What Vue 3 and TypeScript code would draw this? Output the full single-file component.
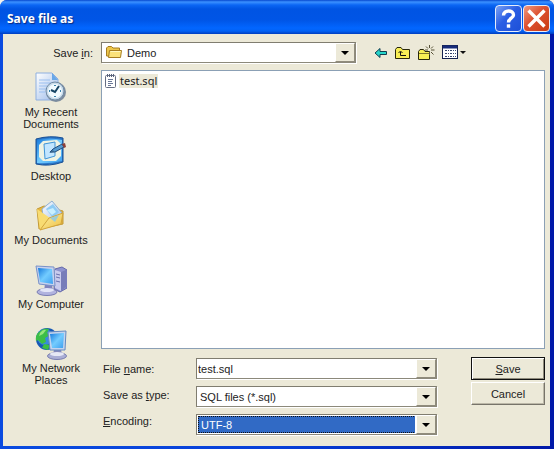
<script setup lang="ts">
import { ref } from 'vue'

interface Place {
  id: string
  label: string
}

const places: Place[] = [
  { id: 'recent', label: 'My Recent Documents' },
  { id: 'desktop', label: 'Desktop' },
  { id: 'documents', label: 'My Documents' },
  { id: 'computer', label: 'My Computer' },
  { id: 'network', label: 'My Network Places' },
]

const files = ref<string[]>(['test.sql'])
const folder = ref('Demo')
const fileName = ref('test.sql')
const fileType = ref('SQL files (*.sql)')
const encoding = ref('UTF-8')
</script>

<template>
  <main class="window">
    <header class="titlebar">
      <h1>Save file as</h1>
      <button type="button" class="caption help" aria-label="Help">
        <svg viewBox="0 0 21 21" width="21" height="21" fill="none" stroke="#fff" stroke-width="3.400">
          <path d="M5.500 7.500C5.500 1.500 15.500 1.500 15.500 7C15.500 10.500 10.500 10 10.500 14.500" />
          <path d="M8.800 18H12.200" />
        </svg>
      </button>
      <button type="button" class="caption close" aria-label="Close">
        <svg viewBox="0 0 21 21" width="21" height="21" fill="none" stroke="#fff" stroke-width="3.400">
          <path d="M2.500 2.500L18.500 18.500M18.500 2.500L2.500 18.500" />
        </svg>
      </button>
    </header>

    <form class="body" @submit.prevent>
      <div class="lookin">
        <label for="folder">Save <u>i</u>n:</label>
        <div class="combo folder">
          <svg class="folder-icon" viewBox="0 0 16 16" width="16" height="16">
            <path d="M.5 12V4L2 2.500H5.500L7 4H13.500V13Z" fill="#edc64a" stroke="#a67d20" />
            <path d="M2.500 13.500L3.500 6.500H15.500L14.500 13.500Z" fill="#fbe27a" stroke="#a67d20" />
            <path d="M4.500 7.500H14.500" stroke="#fff8c0" />
          </svg>
          <select id="folder" v-model="folder"><option>Demo</option></select>
          <span class="arrow" aria-hidden="true"><i></i></span>
        </div>
        <div class="tools">
          <button type="button" aria-label="Back">
            <svg viewBox="0 0 14 12" width="14" height="12">
              <path d="M1 6L6 1.500V4.500H12.500V7.500H6V10.500Z" fill="#25d5ca" stroke="#123d50" />
            </svg>
          </button>
          <button type="button" aria-label="Up one level">
            <svg viewBox="0 0 16 14" width="16" height="14">
              <path d="M.5 12.500V3.500L2 1.500H6L7.500 3.500H14.500V12.500Z" fill="#f8ee55" stroke="#29270c" />
              <path d="M5.500 9.500V6M5.500 9.500H11M3.500 7L5.500 5L7.500 7" fill="none" stroke="#111" />
            </svg>
          </button>
          <button type="button" aria-label="Create new folder">
            <svg viewBox="0 0 17 16" width="17" height="16">
              <path d="M.5 14.500V6.500L2 4.500H5.500L7 6.500H11.500V14.500Z" fill="#f8ee55" stroke="#29270c" />
              <path d="M1 8.500H11" stroke="#81772a" />
              <path d="M11.500 0V3M11.500 7V10M7 5H10M13 5H16.500M8 1.500L10 3.500M15 1.500L13 3.500M13 7L15.500 9.500" stroke="#555036" />
            </svg>
          </button>
          <button type="button" aria-label="View menu">
            <svg viewBox="0 0 25 15" width="25" height="15">
              <rect x=".5" y=".5" width="15" height="13" fill="#fff" stroke="#17234f" />
              <path d="M1 2H15" stroke="#182c7a" stroke-width="3" />
              <path d="M3 5.500H14M3 8.500H14M3 11.500H14" stroke="#36456d" stroke-dasharray="2 1 1 1" />
              <path d="M18 6H24L21 9Z" fill="#111" />
            </svg>
          </button>
        </div>
      </div>

      <nav class="places" aria-label="Places">
        <button v-for="place in places" :key="place.id" type="button" class="place">
          <svg viewBox="0 0 32 32" width="32" height="32" aria-hidden="true">
            <defs>
              <linearGradient :id="place.id + '-screen'" x1="0" y1="0" x2="1" y2="1">
                <stop offset="0" stop-color="#1779dc" />
                <stop offset=".5" stop-color="#73ccff" />
                <stop offset="1" stop-color="#3f9fee" />
              </linearGradient>
              <linearGradient :id="place.id + '-pale'" x1="0" y1="0" x2="1" y2="1">
                <stop offset="0" stop-color="#fff" />
                <stop offset="1" stop-color="#9ab9e9" />
              </linearGradient>
              <linearGradient :id="place.id + '-gold'" x1="0" y1="0" x2="1" y2="1">
                <stop offset="0" stop-color="#fff6ae" />
                <stop offset="1" stop-color="#edbd3e" />
              </linearGradient>
            </defs>
            <g v-if="place.id === 'recent'">
              <path d="M1 1H17L23 7V28H1Z" :fill="`url(#${place.id}-pale)`" stroke="#8eafe0" />
              <path d="M17 1V8H23Z" fill="#68a7e7" />
              <path d="M4 8H15M4 11H17M4 14H12M4 17H11M4 20H10" stroke="#9abff0" />
              <circle cx="21" cy="20" r="10" fill="#7d8c9e" />
              <circle cx="20" cy="19" r="9" fill="#c8dae9" stroke="#718ba5" />
              <circle cx="20" cy="19" r="7" fill="#f1faff" />
              <path d="M20 13V14M20 24V25M14 19H15M25 19H26" stroke="#3983ad" stroke-width="2" />
              <path d="M24 14L20 20L16 18" fill="none" stroke="#174565" stroke-width="2" />
            </g>
            <g v-else-if="place.id === 'desktop'">
              <path d="M1 3Q15-1 28 2L28 26Q14 31 1 28Z" fill="#2a76c8" stroke="#174e93" />
              <path d="M2 4Q15 1 27 4V25Q14 28 2 27Z" :fill="`url(#${place.id}-screen)`" />
              <path d="M8 5L22 4L26 8V20L21 25H8L4 21V9Z" fill="#eef3e4" />
              <path d="M9 8L20 6V20L10 23Z" fill="#c2e6ff" stroke="#4095d7" />
              <path d="M15 16L18 13L27 8L29 11L20 16Z" fill="#559bd2" stroke="#224d7d" />
              <path d="M27 8L30 7L31 11L29 12Z" fill="#8e4038" />
              <path d="M14 17L18 14L19 16Z" fill="#35658f" />
            </g>
            <g v-else-if="place.id === 'documents'">
              <path d="M4 29L2 9L9 6L28 11L28 24Z" fill="#e7b840" stroke="#c39a37" />
              <path d="M7 9L17 1L27 13L21 25L9 22Z" :fill="`url(#${place.id}-pale)`" stroke="#8eafd2" />
              <path d="M11 9L18 4L24 12L18 18Z" fill="#8ecbf4" />
              <path d="M12 10L18 8L21 12L17 15Z" fill="#c8efff" />
              <path d="M2 9L15 18L5 30Z" fill="#f8dc72" />
              <path d="M5 30L14 18L28 13L26 24Z" :fill="`url(#${place.id}-gold)`" stroke="#d2a53b" />
              <path d="M15 18L20 22L24 15Z" fill="#8ac8e9" opacity=".8" />
            </g>
            <g v-else-if="place.id === 'computer'">
              <path d="M20 5L27 3L32 6V24L25 28L19 25Z" fill="#8e93cf" stroke="#6569aa" />
              <path d="M20 6L26 8V27L20 24Z" fill="#c8cbed" />
              <path d="M26 8L31 6V23L26 27Z" fill="#777db9" />
              <path d="M21 10L25 11M21 13L25 14M21 17L25 18" stroke="#6970ae" />
              <ellipse cx="12" cy="28" rx="10" ry="3.500" fill="#b1b3df" stroke="#797cb2" />
              <path d="M10 20L17 21L18 27H9Z" fill="#8184be" />
              <ellipse cx="12" cy="26" rx="7" ry="2" fill="#e3e5f7" />
              <path d="M1 2L19 3L20 22L4 20Z" fill="#c8d2ee" stroke="#7891c8" />
              <path d="M3 4L17 5L18 20L5 18Z" :fill="`url(#${place.id}-screen)`" />
            </g>
            <g v-else>
              <circle cx="12" cy="11" r="11" fill="#1759b5" />
              <circle cx="10" cy="9" r="8" fill="#378ae0" />
              <path d="M4 4Q9-1 14 1L12 5L15 7L10 10L11 14L7 16L3 12L1 13Q0 7 4 4ZM9 16L15 17L13 22L7 20Z" fill="#3cbe47" />
              <path d="M5 5Q8 1 11 2L8 6L4 8Z" fill="#98e67d" />
              <ellipse cx="22" cy="28" rx="9.500" ry="3.500" fill="#aaaed5" stroke="#777caf" />
              <path d="M19 21H26L27 27H18Z" fill="#8589bb" />
              <ellipse cx="22" cy="26" rx="7" ry="2" fill="#e6e8f5" />
              <path d="M13 4L31 3L30 22L15 22Z" fill="#c4d4ee" stroke="#6489c0" />
              <path d="M15 6L29 5L28 20L17 20Z" :fill="`url(#${place.id}-screen)`" />
            </g>
          </svg>
          <span>{{ place.label }}</span>
        </button>
      </nav>

      <ul class="files">
        <li v-for="file in files" :key="file">
          <svg viewBox="0 0 13 16" width="13" height="16" aria-hidden="true">
            <rect x="1.500" y="2.500" width="10" height="12" rx="1" fill="#fff" stroke="#666e83" />
            <path d="M3.500 1V4M5.500 1V4M7.500 1V4M9.500 1V4" stroke="#59637c" />
            <path d="M4 6.500H9M4 8.500H8M4 10.500H9M4 12.500H7" stroke="#697797" />
          </svg>
          <span>{{ file }}</span>
        </li>
      </ul>

      <section class="details">
        <div class="labels">
          <label for="file-name">File <u>n</u>ame:</label>
          <label for="file-type">Save as <u>t</u>ype:</label>
          <label for="encoding"><u>E</u>ncoding:</label>
        </div>
        <div class="fields">
          <div class="combo">
            <input id="file-name" v-model="fileName" type="text" />
            <button type="button" class="arrow" aria-label="Recent file names"><i></i></button>
          </div>
          <div class="combo">
            <select id="file-type" v-model="fileType"><option>SQL files (*.sql)</option></select>
            <span class="arrow" aria-hidden="true"><i></i></span>
          </div>
          <div class="combo selected">
            <select id="encoding" v-model="encoding"><option>UTF-8</option></select>
            <span class="arrow" aria-hidden="true"><i></i></span>
          </div>
        </div>
        <div class="actions">
          <button type="submit" class="push default"><u>S</u>ave</button>
          <button type="button" class="push">Cancel</button>
        </div>
      </section>
    </form>
  </main>
</template>

<style>
body {
  margin: 0;
  background: #f4f3ee;
}
</style>

<style scoped>
* {
  box-sizing: border-box;
}
.window {
  min-height: 100vh;
  display: flex;
  flex-direction: column;
  padding: 0 4px 3px 3px;
  background: linear-gradient(90deg, #0a4be0, #0840d8 50%, #0018a8);
  border-radius: 7px 7px 0 0;
  overflow: hidden;
  font-family: "Liberation Sans", Arial, sans-serif;
  font-size: 11px;
  line-height: 14px;
  color: #222;
}
button,
input,
select {
  font: inherit;
  color: inherit;
  margin: 0;
  padding: 0;
  border: 0;
  border-radius: 0;
  background: none;
  outline: 0;
}
svg {
  display: block;
  flex: none;
}
.titlebar {
  height: 34px;
  margin: 0 -4px 0 -3px;
  padding: 3px 4px 0 7px;
  display: flex;
  align-items: center;
  gap: 1px;
  background: linear-gradient(#0648cf 0, #3b91ff 2px, #0b66f4 5px, #0054e3 9px, #0055e6 20px, #0266ff 28px, #0262f5 31px, #003dbf 34px);
}
h1 {
  flex: 1;
  margin: 0;
  font-family: "Noto Sans", sans-serif;
  font-size: 12px;
  font-weight: 700;
  line-height: 16px;
  color: #fff;
  text-shadow: 1px 1px 1px #0a2a80;
}
.caption {
  width: 27px;
  height: 27px;
  display: grid;
  place-items: center;
  border: 1px solid #e6edfb;
  border-radius: 4px;
}
.help {
  background: linear-gradient(135deg, #7ba1f3, #2a5ee4 45%, #1d50d8);
}
.close {
  background: linear-gradient(135deg, #f0997f, #dc5030 45%, #c93c14);
}
.body {
  flex: 1;
  display: grid;
  grid-template-columns: 98px 1fr;
  grid-template-rows: auto 1fr auto;
  padding: 8px 5px 11px 0;
  background: #ece9d8;
}
.lookin {
  grid-column: 1 / 3;
  display: grid;
  grid-template-columns: 98px 255fr 189fr;
  align-items: center;
  height: 21px;
}
.lookin label {
  padding-right: 8px;
  text-align: right;
}
.combo {
  display: grid;
  grid-template-columns: 1fr 20px;
  height: 21px;
  border: 1px solid;
  border-color: #807d70 #8c897b #8c897b #807d70;
  box-shadow: 1px 1px #fff;
  background: #fff;
}
.combo select,
.combo input {
  grid-area: 1 / 1;
  min-width: 0;
  width: 100%;
  height: 19px;
  padding-left: 3px;
  appearance: none;
}
.combo input {
  padding-left: 1px;
}
.combo select {
  grid-column: 1 / 3;
}
.arrow {
  grid-area: 1 / 2;
  display: grid;
  place-items: center;
  pointer-events: none;
  background: #ece9d8;
  border: 1px solid;
  border-color: #fff #8f8b7c #8f8b7c #fff;
}
button.arrow {
  pointer-events: auto;
}
.arrow i {
  border: 4px solid transparent;
  border-top-color: #000;
  border-bottom: 0;
}
.folder select {
  padding-left: 25px;
}
.folder-icon {
  grid-area: 1 / 1;
  margin: 1px 0 0 4px;
  pointer-events: none;
  z-index: 1;
}
.tools {
  display: flex;
  align-items: center;
  gap: 7px;
  padding-left: 18px;
}
.places {
  display: flex;
  flex-direction: column;
  grid-row: 2 / 4;
  padding: 9px 4px 0 2px;
}
.place {
  height: 64px;
  display: flex;
  flex-direction: column;
  align-items: center;
  line-height: 12px;
}
.place span {
  width: 76px;
  padding-top: 2px;
}
.files {
  margin: 7px 0 0;
  padding: 2px;
  list-style: none;
  background: #fff;
  border: 1px solid #8ba0b5;
}
.files li {
  display: flex;
  align-items: center;
  gap: 2px;
}
.files span {
  padding: 0 1px;
  background: #ece9d8;
  font-family: "Noto Sans", sans-serif;
}
.details {
  display: grid;
  grid-template-columns: 95px 1fr 74px;
  padding-top: 8px;
}
.labels {
  display: flex;
  flex-direction: column;
  gap: 12px;
  padding: 5px 0 0 2px;
}
.fields {
  display: flex;
  flex-direction: column;
  gap: 7px;
  margin: 1px 34px 0 0;
}
.selected {
  padding: 1px 0 1px 1px;
}
.selected select {
  grid-column: 1 / 2;
  height: 17px;
  padding-left: 2px;
  background: #316ac5;
  border: 1px dotted #111;
  color: #fff;
}
.selected .arrow {
  margin: -1px 0;
  box-shadow: -1px 0 #fff;
}
.actions {
  display: flex;
  flex-direction: column;
  gap: 2px;
}
.push {
  height: 23px;
  background: #ece9d8;
  border: 1px solid;
  border-color: #fff #77746a #77746a #fff;
  box-shadow: inset -1px -1px #bcb8a8;
}
.default {
  border-color: #111;
  box-shadow: inset 1px 1px #fff, inset -1px -1px #8f8b7c;
}
u {
  text-underline-offset: 1px;
}
</style>
